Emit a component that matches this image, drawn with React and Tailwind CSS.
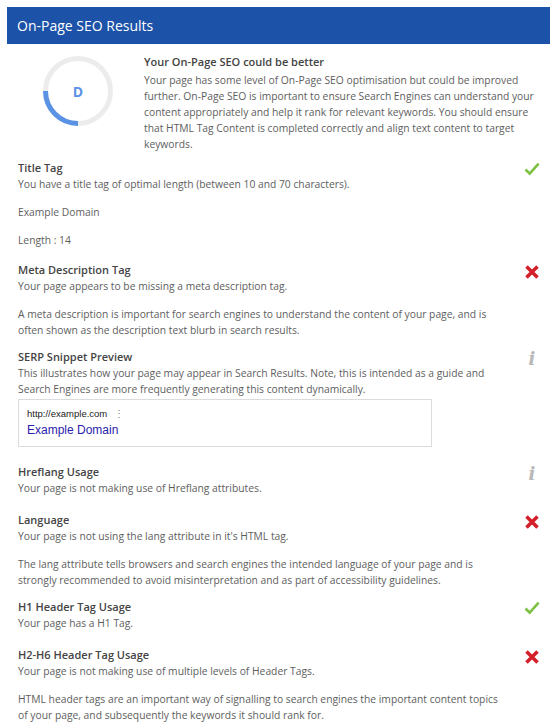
import React from 'react';

const Check = () => (
  <svg width="16" height="14" viewBox="0 0 16 14">
    <path d="M1.5 7.5 L5.7 11.6 L14.6 1.6" fill="none" stroke="#7dc142" strokeWidth="2.6" />
  </svg>
);

const Cross = () => (
  <svg width="16" height="16" viewBox="0 0 16 16">
    <path d="M2.5 2.5 L13.5 13.5 M13.5 2.5 L2.5 13.5" fill="none" stroke="#d4202a" strokeWidth="3.6" />
  </svg>
);

const Info = () => (
  <span className="block w-[16px] text-center font-['DejaVu_Serif',serif] italic font-bold text-[18px] leading-[16px] text-[#b8b8b8]">
    i
  </span>
);

const Section = ({ title, icon, mb, children }) => (
  <div className={`flex ${mb}`}>
    <div className="w-[490px]">
      <h3 className="text-[11px] leading-[17px] font-semibold text-[#444]">{title}</h3>
      <div className="flex flex-col gap-[12px]">{children}</div>
    </div>
    <div className="flex-1 flex justify-end pt-[3px]">{icon}</div>
  </div>
);

const P = ({ children }) => <p className="text-[10.3px] leading-[16px] text-[#5e5e5e]">{children}</p>;

const Grade = () => (
  <div className="relative w-[70px] h-[70px]">
    <svg width="70" height="70" viewBox="0 0 70 70">
      <circle cx="35" cy="35" r="32.5" fill="none" stroke="#ececec" strokeWidth="5" />
      <path d="M35 67.5 A32.5 32.5 0 0 1 2.5 35" fill="none" stroke="#5a93e4" strokeWidth="5" />
    </svg>
    <span className="absolute inset-0 flex items-center justify-center text-[14px] font-bold text-[#5a93e4]">D</span>
  </div>
);

export default function App() {
  return (
    <div className="bg-white min-h-[728px] font-['Open_Sans',sans-serif]">
      <div className="mx-[7px] pt-[7px]">
        <div className="h-[37px] bg-[#1c52a8] pl-[10px] flex items-center text-white text-[14px]">
          On-Page SEO Results
        </div>
      </div>

      <div className="pl-[18px] pr-[17px] pt-[9px]">
        <div className="flex mb-[7px]">
          <div className="w-[126px] pt-[3px] pl-[25px]">
            <Grade />
          </div>
          <div className="flex-1">
            <h3 className="text-[11px] leading-[18px] font-semibold text-[#444]">Your On-Page SEO could be better</h3>
            <p className="mt-[1px] text-[10.3px] leading-[16px] text-[#5e5e5e]">
              Your page has some level of On-Page SEO optimisation but could be improved further. On-Page SEO is important to ensure Search Engines can understand your content appropriately and help it rank for relevant keywords. You should ensure that HTML Tag Content is completed correctly and align text content to target keywords.
            </p>
          </div>
        </div>

        <Section title="Title Tag" icon={<Check />} mb="mb-[13px]">
          <P>You have a title tag of optimal length (between 10 and 70 characters).</P>
          <P>Example Domain</P>
          <P>Length : 14</P>
        </Section>

        <Section title="Meta Description Tag" icon={<Cross />} mb="mb-[10px]">
          <P>Your page appears to be missing a meta description tag.</P>
          <P>A meta description is important for search engines to understand the content of your page, and is often shown as the description text blurb in search results.</P>
        </Section>

        <Section title="SERP Snippet Preview" icon={<Info />} mb="mb-[16px]">
          <div>
            <P>This illustrates how your page may appear in Search Results. Note, this is intended as a guide and Search Engines are more frequently generating this content dynamically.</P>
            <div className="mt-[2px] w-[414px] border border-[#dcdcdc] px-[8px] pt-[7px] pb-[8px] font-['Liberation_Sans',Arial,sans-serif]">
              <div className="flex items-center text-[9.5px] leading-[14px] text-[#222]">
                <span>http://example.com</span>
                <span className="ml-[7px] text-[#777] text-[10px]">⋮</span>
              </div>
              <div className="mt-[1px] text-[12px] leading-[16px] text-[#2a22ad]">Example Domain</div>
            </div>
          </div>
        </Section>

        <Section title="Hreflang Usage" icon={<Info />} mb="mb-[15px]">
          <P>Your page is not making use of Hreflang attributes.</P>
        </Section>

        <Section title="Language" icon={<Cross />} mb="mb-[10px]">
          <P>Your page is not using the lang attribute in it's HTML tag.</P>
          <P>The lang attribute tells browsers and search engines the intended language of your page and is strongly recommended to avoid misinterpretation and as part of accessibility guidelines.</P>
        </Section>

        <Section title="H1 Header Tag Usage" icon={<Check />} mb="mb-[15px]">
          <P>Your page has a H1 Tag.</P>
        </Section>

        <Section title="H2-H6 Header Tag Usage" icon={<Cross />} mb="mb-[10px]">
          <P>Your page is not making use of multiple levels of Header Tags.</P>
          <P>HTML header tags are an important way of signalling to search engines the important content topics of your page, and subsequently the keywords it should rank for.</P>
        </Section>
      </div>
    </div>
  );
}
